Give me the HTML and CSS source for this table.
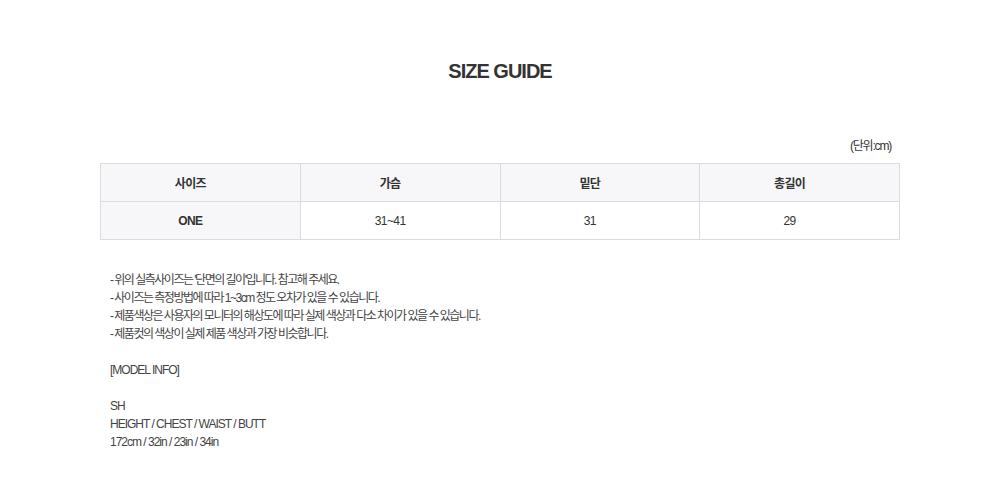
FILE: index.html
```html
<!DOCTYPE html>
<html lang="ko">
<head>
<meta charset="utf-8">
<link rel="stylesheet" href="styles.css">
</head>
<body>
<div class="page">
  <h2 class="title">SIZE GUIDE</h2>
  <div class="unit">(단위:cm)</div>
  <table class="size-table">
    <thead>
      <tr><th>사이즈</th><th>가슴</th><th>밑단</th><th>총길이</th></tr>
    </thead>
    <tbody>
      <tr><td class="size-name">ONE</td><td>31~41</td><td>31</td><td>29</td></tr>
    </tbody>
  </table>
  <div class="notes">
    <p class="ko">- 위의 실측사이즈는 '단면의 길이'입니다. 참고해 주세요.</p>
    <p class="ko">- 사이즈는 측정방법에 따라 1~3cm 정도 오차가 있을 수 있습니다.</p>
    <p class="ko">- 제품색상은 사용자의 모니터의 해상도에 따라 실제 색상과 다소 차이가 있을 수 있습니다.</p>
    <p class="ko">- 제품컷의 색상이 실제 제품 색상과 가장 비슷합니다.</p>
    <p class="blank">&nbsp;</p>
    <p>[MODEL INFO]</p>
    <p class="blank">&nbsp;</p>
    <p>SH</p>
    <p>HEIGHT / CHEST / WAIST / BUTT</p>
    <p>172cm / 32in / 23in / 34in</p>
  </div>
</div>
</body>
</html>
```
FILE: styles.css
```css
html, body {
  margin: 0;
  padding: 0;
  background: #fff;
}
body {
  font-family: "Liberation Sans", "Noto Sans CJK KR", sans-serif;
  color: #333;
}
.page {
  width: 800px;
  margin: 0 auto;
  padding-top: 59px;
}
.title {
  margin: 0;
  text-align: center;
  font-size: 20px;
  line-height: 24px;
  font-weight: bold;
  letter-spacing: -1px;
  color: #333;
}
.unit {
  margin-top: 53px;
  text-align: right;
  padding-right: 9px;
  font-size: 12px;
  line-height: 20px;
  letter-spacing: -1.2px;
  color: #333;
}
.size-table {
  margin-top: 7px;
  width: 800px;
  border-collapse: collapse;
  table-layout: fixed;
}
.size-table th,
.size-table td {
  border: 1px solid #dcdcdc;
  height: 37px;
  padding: 0 20px 0 0;
  text-align: center;
  font-size: 12px;
  letter-spacing: -0.6px;
  color: #333;
}
.size-table th {
  background: #f7f7f9;
  font-weight: bold;
}
.size-table td.size-name {
  font-weight: bold;
  background: #f7f7f9;
}
.notes {
  margin-top: 31px;
  padding-left: 10px;
  font-size: 12px;
  line-height: 18px;
  letter-spacing: -1px;
  color: #444;
}
.notes p {
  margin: 0;
}
.notes p.ko {
  letter-spacing: -1.5px;
}
```
